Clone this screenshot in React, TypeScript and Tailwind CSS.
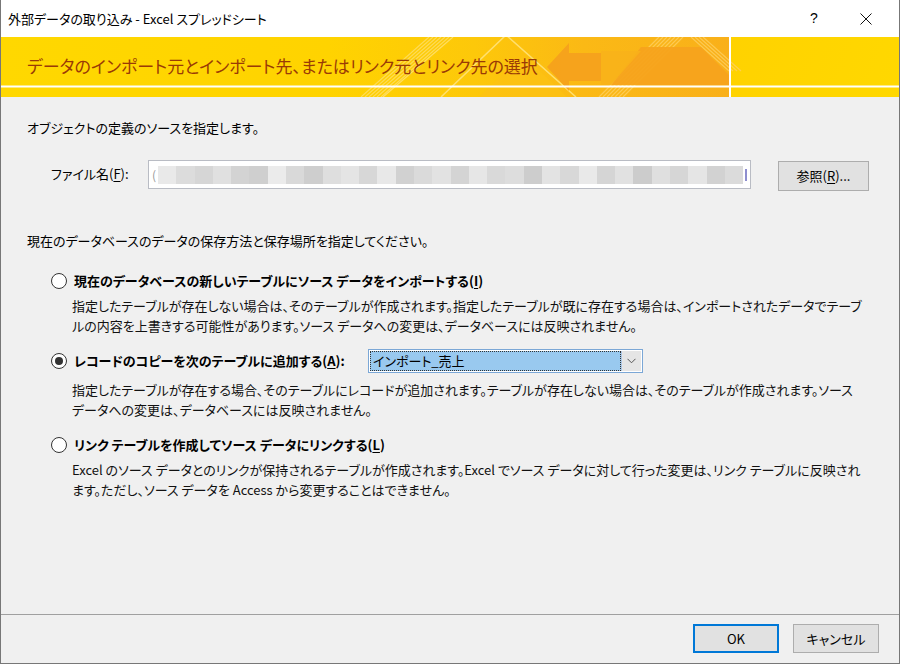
import React from "react";

const F = "font-['Noto_Sans_CJK_JP','Noto_Sans',sans-serif]";

function Radio({ checked }: { checked?: boolean }) {
  return (
    <div className="w-[16px] h-[16px] rounded-full border border-[#333] bg-white flex items-center justify-center shrink-0">
      {checked && <div className="w-[8px] h-[8px] rounded-full bg-[#333]" />}
    </div>
  );
}

function Banner() {
  return (
    <div className="relative h-[60px] bg-[#ffd600] overflow-hidden">
      <svg className="absolute inset-0" width="898" height="60" viewBox="0 0 898 60">
        <defs>
          <linearGradient id="g1" x1="0" y1="0" x2="728" y2="0" gradientUnits="userSpaceOnUse">
            <stop offset="0" stopColor="#ffd800" />
            <stop offset="0.45" stopColor="#ffd300" />
            <stop offset="0.65" stopColor="#fdc80a" />
            <stop offset="0.8" stopColor="#fbb915" />
            <stop offset="1" stopColor="#f9b01a" />
          </linearGradient>
          <linearGradient id="g2" x1="730" y1="0" x2="898" y2="60" gradientUnits="userSpaceOnUse">
            <stop offset="0" stopColor="#ffd200" />
            <stop offset="1" stopColor="#ffd800" />
          </linearGradient>
        </defs>
        <rect x="0" y="0" width="728" height="60" fill="url(#g1)" />
        <rect x="730" y="0" width="168" height="60" fill="url(#g2)" />
        {/* light triangle outlines */}
        <polyline points="382,60 452,0" stroke="#ffe27a" strokeWidth="1.2" fill="none" opacity="0.8" />
        <polyline points="440,60 505,-2 575,60" stroke="#ffe27a" strokeWidth="1.5" fill="none" opacity="0.9" />
        <polygon points="478,60 522,18 566,60" fill="#fcc214" opacity="0.7" />
        {/* stripe bundles */}
        {[0, 4, 8, 12, 16, 20].map((d) => (
          <line key={"a" + d} x1={360 + d} y1={60} x2={428 + d} y2={0} stroke="#ffe27a" strokeWidth="1.2" opacity="0.7" />
        ))}
        {[0, 4, 8, 12, 16, 20, 24].map((d) => (
          <line key={"b" + d} x1={598 + d} y1={60} x2={658 + d} y2={0} stroke="#ffd060" strokeWidth="1.3" opacity="0.8" />
        ))}
        {[0, 4, 8, 12].map((d) => (
          <line key={"c" + d} x1={690 + d} y1={0} x2={728 + d} y2={34} stroke="#ffd060" strokeWidth="1.2" opacity="0.8" />
        ))}
        {/* arrow pointing left */}
        <polygon points="546,30 568,6 568,16 600,16 600,44 568,44 568,54" fill="#f6a11c" opacity="0.95" />
        {/* trapezoid */}
        <polygon points="640,10 700,10 728,38 728,48 610,48" fill="#f7a31c" opacity="0.95" />
        <polygon points="600,14 640,14 610,48 600,48" fill="#f9b21a" opacity="0.8" />
        <line x1="0" y1="49.5" x2="898" y2="49.5" stroke="#ffffff" strokeWidth="2" />
        <line x1="729" y1="0" x2="729" y2="60" stroke="#ffffff" strokeWidth="2" />
      </svg>
      <div className={`relative pl-[26px] pt-[16px] text-[17px] leading-[26px] text-[#9a3a06] ${F} [font-feature-settings:'palt'] whitespace-nowrap`}>
        データのインポート元とインポート先、またはリンク元とリンク先の選択
      </div>
    </div>
  );
}

const blurCols = [
  "#e9e9e9", "#dcdcdc", "#d6d6d6", "#e0e0e0", "#d3d3d3", "#cfcfcf", "#ebebeb", "#d9d9d9", "#cecece",
  "#dedede", "#e4e4e4", "#d7d7d7", "#e8e8e8", "#d1d1d1", "#dadada", "#e2e2e2", "#d4d4d4", "#e6e6e6",
  "#d9d9d9", "#dddddd", "#cdcdcd", "#e3e3e3", "#d8d8d8", "#e9e9e9", "#d5d5d5", "#e1e1e1", "#cccccc",
  "#dfdfdf", "#d6d6d6", "#e5e5e5", "#d2d2d2", "#dbdbdb",
];

export default function App() {
  return (
    <div className={`w-[900px] h-[664px] bg-[#f0f0f0] border-x border-b border-[#777] flex flex-col text-black ${F} [font-feature-settings:'palt'] overflow-hidden`}>
      {/* Title bar */}
      <div className="h-[37px] bg-white flex items-center shrink-0">
        <div className="pl-[7px] text-[13px] whitespace-nowrap">外部データの取り込み - Excel スプレッドシート</div>
        <div className="flex-1" />
        <div className="w-[22px] text-center text-[14px] font-['Liberation_Sans',sans-serif] mr-[35px]">?</div>
        <svg width="12" height="12" viewBox="0 0 12 12" className="mr-[27px]">
          <path d="M0.5 0.5 L11.5 11.5 M11.5 0.5 L0.5 11.5" stroke="#111" strokeWidth="1" />
        </svg>
      </div>
      <Banner />

      {/* Content */}
      <div className="flex-1 pl-[26px] text-[13px]">
        <div className="mt-[21px] h-[20px] leading-[20px]">オブジェクトの定義のソースを指定します。</div>

        <div className="mt-[22px] flex items-start">
          <div className="pl-[24px] w-[121px] h-[28px] leading-[28px] whitespace-nowrap">
            ファイル名(<span className="underline underline-offset-2">F</span>):
          </div>
          <div className="w-[603px] h-[29px] border border-[#b9bcc4] bg-white flex items-center px-[3px]">
            <span className="text-[#999] text-[12px] mr-[2px]">(</span>
            <div className="flex-1 flex h-[18px]">
              {blurCols.map((c, i) => (
                <div key={i} className="flex-1 h-full" style={{ background: c }} />
              ))}
            </div>
            <div className="w-[2px] h-[12px] bg-[#8e8ecf] ml-[2px]" />
          </div>
          <button className="ml-[27px] mt-[1px] w-[91px] h-[30px] border border-[#adadad] bg-[#e1e1e1] text-[13px] flex items-center justify-center">
            参照(<span className="underline underline-offset-2">R</span>)...
          </button>
        </div>

        <div className="mt-[40px] h-[20px] leading-[20px]">現在のデータベースのデータの保存方法と保存場所を指定してください。</div>

        <div className="pl-[24px]">
          <div className="mt-[20px] h-[20px] flex items-center gap-[7px]">
            <Radio />
            <div className="font-bold leading-[20px] whitespace-nowrap">
              現在のデータベースの新しいテーブルにソース データをインポートする(<span className="underline underline-offset-2">I</span>)
            </div>
          </div>
          <div className="mt-[5px] pl-[21px] leading-[20px] text-[#111]">
            <div className="whitespace-nowrap">指定したテーブルが存在しない場合は、そのテーブルが作成されます。指定したテーブルが既に存在する場合は、インポートされたデータでテーブ</div>
            <div className="whitespace-nowrap">ルの内容を上書きする可能性があります。ソース データへの変更は、データベースには反映されません。</div>
          </div>

          <div className="mt-[13px] h-[24px] flex items-center">
            <Radio checked />
            <div className="ml-[7px] w-[294px] font-bold leading-[20px] whitespace-nowrap">
              レコードのコピーを次のテーブルに追加する(<span className="underline underline-offset-2">A</span>):
            </div>
            <div className="w-[275px] h-[24px] border border-[#7ba7d6] bg-white flex items-stretch p-[1px]">
              <div className="flex-1 bg-[#99c9ef] border border-dotted border-[#333] flex items-center pl-[2px] leading-[18px]">
                インポート_売上
              </div>
              <div className="w-[20px] bg-[#e5e5e5] border-l border-[#b0c8e4] flex items-center justify-center">
                <svg width="9" height="6" viewBox="0 0 9 6">
                  <path d="M0.5 0.8 L4.5 4.8 L8.5 0.8" stroke="#555" strokeWidth="1" fill="none" />
                </svg>
              </div>
            </div>
          </div>
          <div className="mt-[7px] pl-[21px] leading-[20px] text-[#111]">
            <div className="whitespace-nowrap">指定したテーブルが存在する場合、そのテーブルにレコードが追加されます。テーブルが存在しない場合は、そのテーブルが作成されます。ソース</div>
            <div className="whitespace-nowrap">データへの変更は、データベースには反映されません。</div>
          </div>

          <div className="mt-[15px] h-[20px] flex items-center gap-[7px]">
            <Radio />
            <div className="font-bold leading-[20px] whitespace-nowrap">
              リンク テーブルを作成してソース データにリンクする(<span className="underline underline-offset-2">L</span>)
            </div>
          </div>
          <div className="mt-[5px] pl-[21px] leading-[20px] text-[#111]">
            <div className="whitespace-nowrap">Excel のソース データとのリンクが保持されるテーブルが作成されます。Excel でソース データに対して行った変更は、リンク テーブルに反映され</div>
            <div className="whitespace-nowrap">ます。ただし、ソース データを Access から変更することはできません。</div>
          </div>
        </div>
      </div>

      {/* Footer */}
      <div className="h-[49px] border-t border-[#a0a0a0] shrink-0 flex justify-end items-start pt-[9px] pr-[20px] gap-[14px]">
        <button className="w-[86px] h-[29px] border-2 border-[#0078d7] bg-[#e1e1e1] text-[13px] flex items-center justify-center">OK</button>
        <button className="w-[86px] h-[29px] border border-[#adadad] bg-[#e1e1e1] text-[13px] flex items-center justify-center">キャンセル</button>
      </div>
    </div>
  );
}
